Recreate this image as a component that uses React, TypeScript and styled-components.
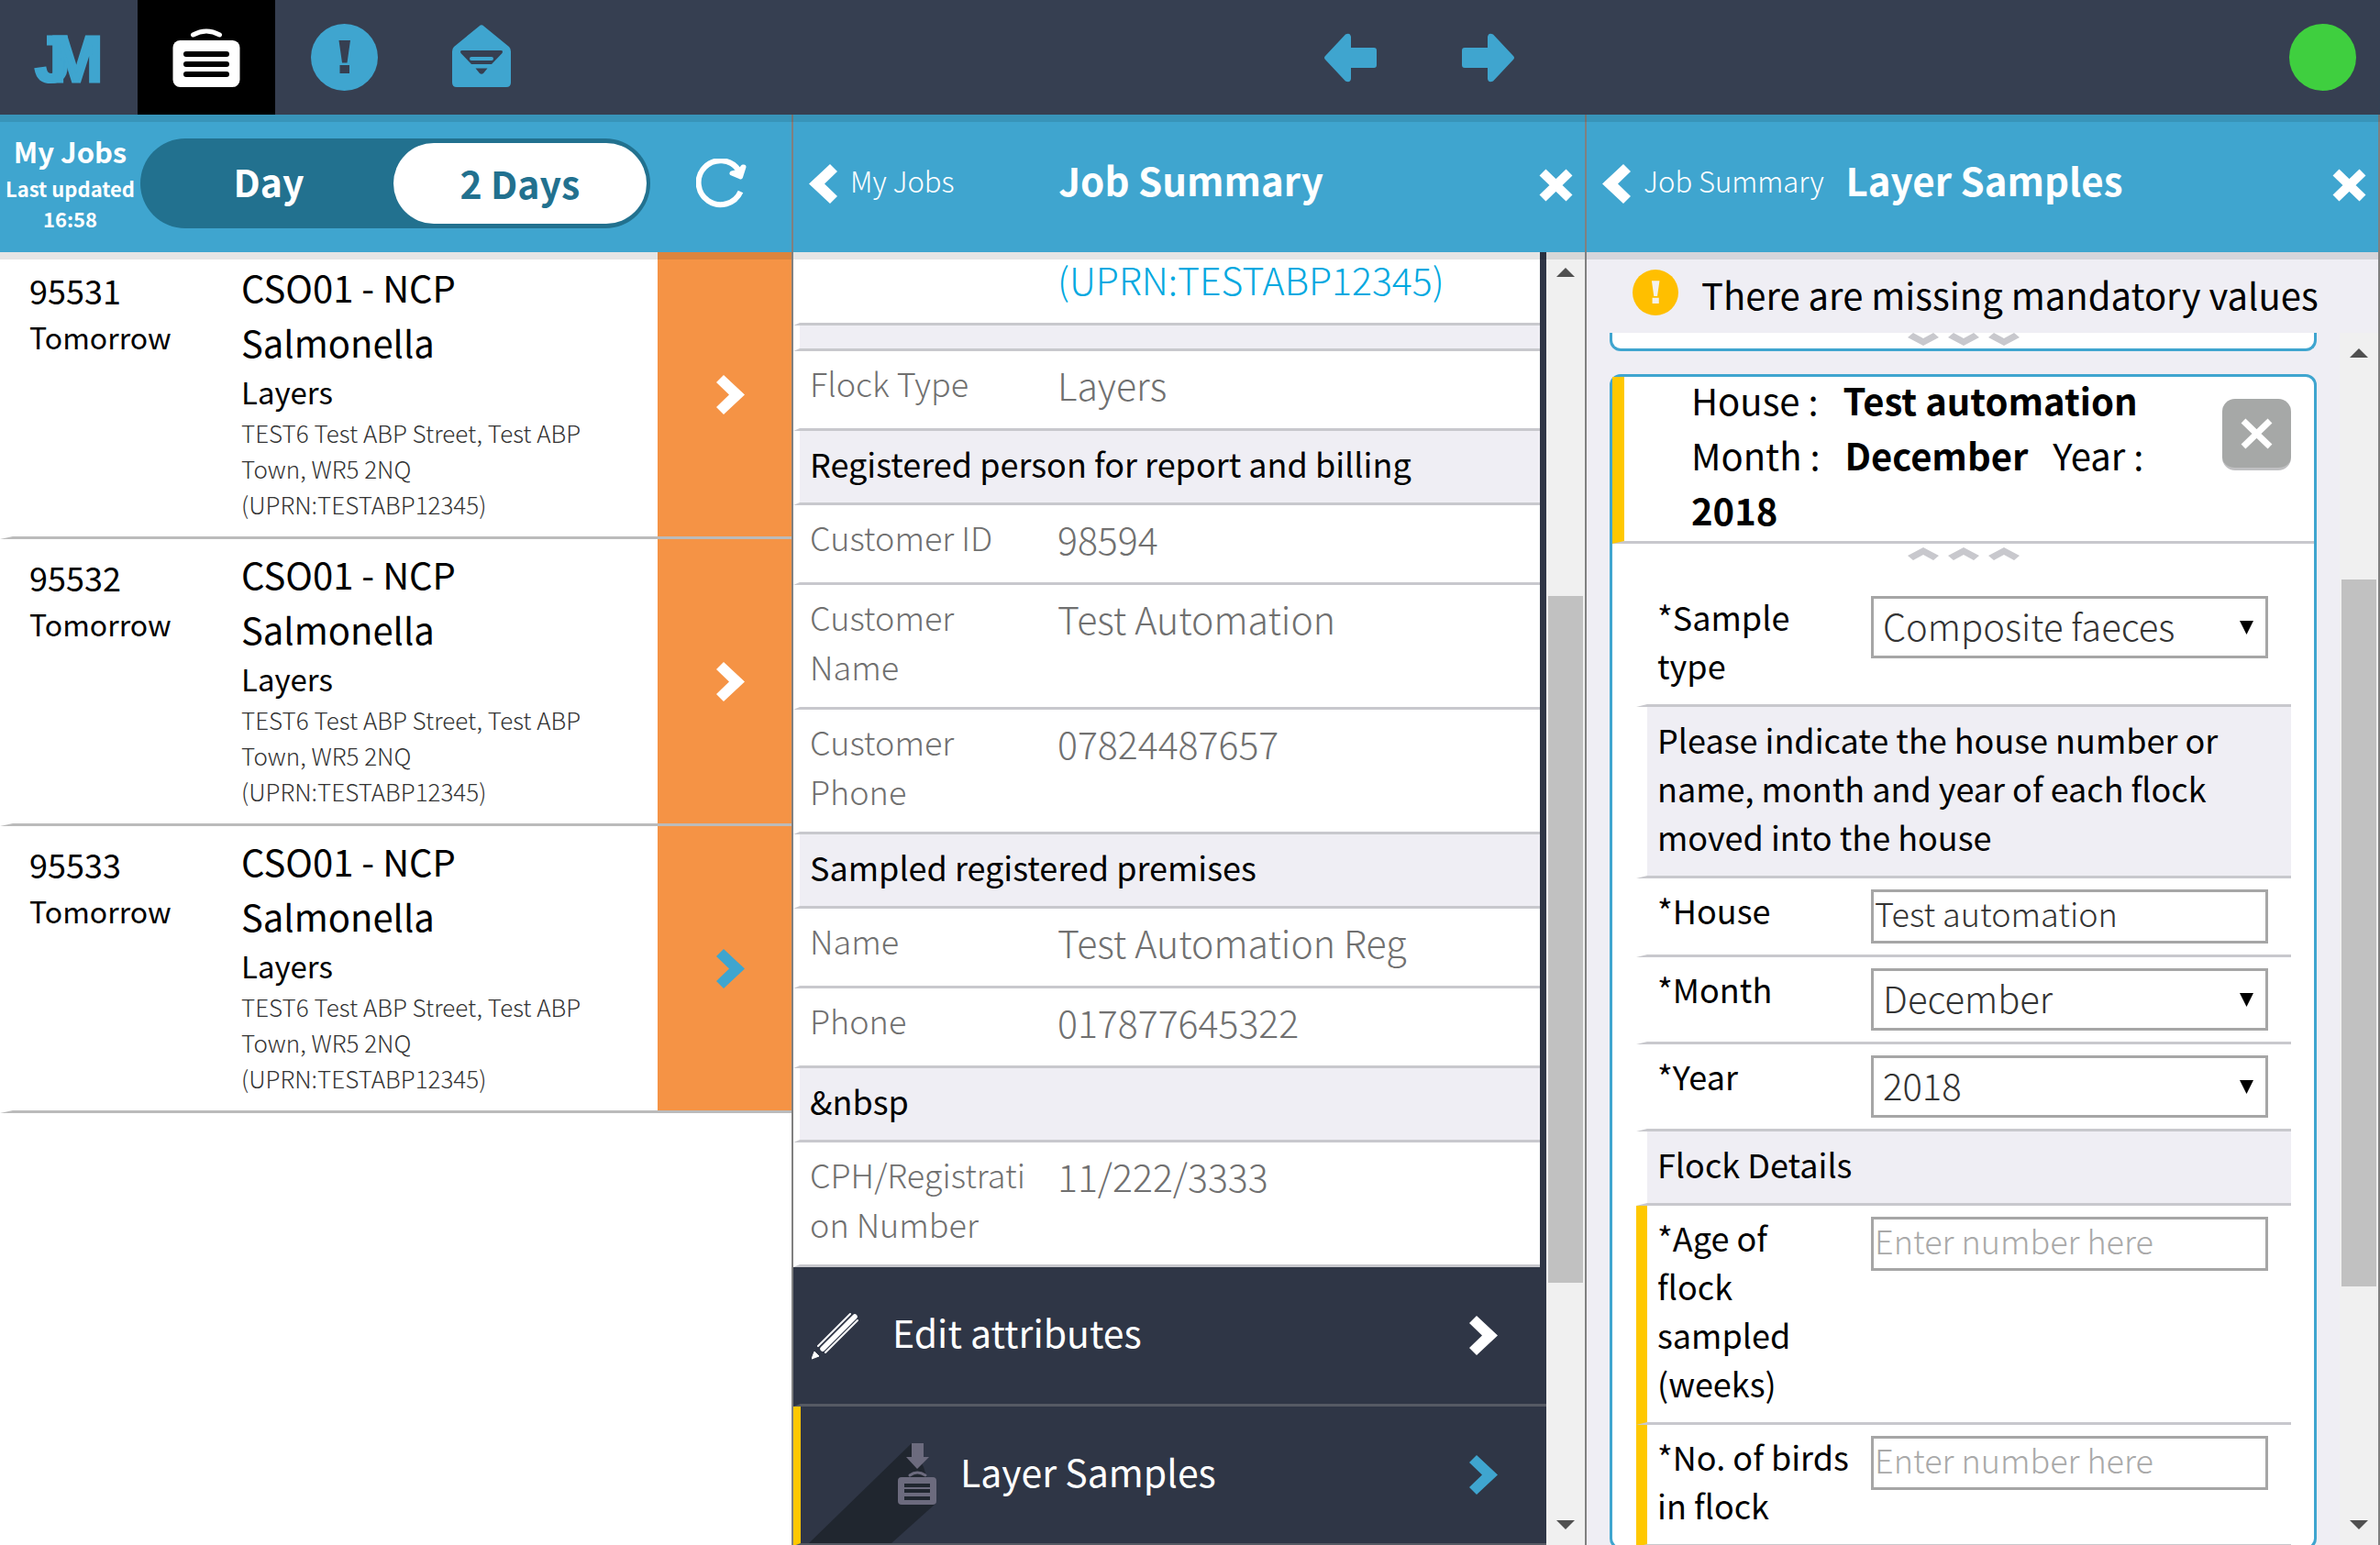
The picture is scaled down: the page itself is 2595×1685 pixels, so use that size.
import React from "react";
import styled, { createGlobalStyle } from "styled-components";

const color = {
  bar: "#363f51",
  blue: "#3fa5cf",
  deepBlue: "#22718f",
  dark: "#2f3646",
  orange: "#f59345",
  yellow: "#ffc800",
  amber: "#ffbf00",
  green: "#3fcf3f",
  panel: "#efeef4",
  line: "#c8c8cd",
  edge: "#808080",
  muted: "#707070",
  soft: "#333",
};

const GlobalStyle = createGlobalStyle`
  *, *::before, *::after { box-sizing: border-box; }
  body {
    margin: 0;
    font-family: "Noto Sans CJK SC", "Noto Sans", sans-serif;
    font-size: 36px;
    color: #000;
    background: #fff;
  }
  button, input, select { font: inherit; color: inherit; }
  button { border: 0; padding: 0; background: none; cursor: pointer; }
  a { color: inherit; text-decoration: none; }
  svg { display: block; flex: none; }
  h1, h2, p, dl, dt, dd, ul { margin: 0; padding: 0; }
`;

const Page = styled.div`
  display: flex;
  flex-direction: column;
  height: 100vh;
  overflow: hidden;
`;

/* ---------- top bar ---------- */

const TopBar = styled.header`
  position: relative;
  z-index: 2;
  display: grid;
  grid-template-columns: 1fr 1fr;
  flex: none;
  height: 125px;
  background: ${color.bar};
  box-shadow: 0 8px 0 rgba(0, 0, 0, 0.1);
`;

const TabList = styled.nav`
  display: flex;
`;

const Tab = styled.button<{ $active?: boolean }>`
  display: flex;
  align-items: center;
  justify-content: center;
  width: 150px;
  height: 125px;
  background: ${(p) => (p.$active ? "#000" : "transparent")};
`;

const HistoryBar = styled.div`
  display: flex;
  align-items: center;
  padding: 0 26px 0 100px;
`;

const Status = styled.span`
  width: 73px;
  height: 73px;
  margin-left: auto;
  border-radius: 50%;
  background: ${color.green};
`;

/* ---------- columns ---------- */

const Columns = styled.main`
  display: grid;
  grid-template-columns: repeat(3, minmax(0, 1fr));
  flex: 1;
  min-height: 0;
`;

const Column = styled.section<{ $tone?: string }>`
  display: flex;
  flex-direction: column;
  min-height: 0;
  border-right: 2px solid ${color.edge};
  background: ${(p) => p.$tone ?? "#fff"};
`;

const ColumnHeader = styled.div`
  position: relative;
  z-index: 1;
  flex: none;
  height: 150px;
  color: #fff;
  background: ${color.blue};
  box-shadow: 0 8px 0 rgba(0, 0, 0, 0.1);
`;

const PanelHeader = styled(ColumnHeader)`
  display: grid;
  grid-template-columns: 1fr auto 1fr;
  align-items: center;
  padding: 0 13px 0 17px;
`;

const BackLink = styled.a`
  display: flex;
  align-items: center;
  gap: 14px;
  font-size: 31px;
  font-weight: 300;
  white-space: nowrap;
`;

const Raised = styled.span`
  padding-bottom: 8px;
`;

const PanelTitle = styled.h2`
  padding-bottom: 10px;
  font-size: 42px;
  font-weight: 700;
  white-space: nowrap;
`;

const CloseButton = styled.button`
  justify-self: end;
  padding-top: 4px;
`;

const Body = styled.div`
  display: flex;
  flex: 1;
  min-height: 0;
`;

const Scroller = styled.div<{ $tone?: string }>`
  flex: 1;
  min-width: 0;
  overflow: hidden;
  background: ${(p) => p.$tone ?? "transparent"};
`;

const Track = styled.div`
  display: flex;
  flex-direction: column;
  flex: none;
  width: 42px;
  background: #f0f0f0;
`;

const TrackEnd = styled.div`
  display: flex;
  align-items: center;
  justify-content: center;
  flex: none;
  height: 44px;
`;

const TrackRun = styled.div<{ $grow: number }>`
  flex: ${(p) => p.$grow} 1 0;
`;

const Thumb = styled(TrackRun)`
  margin: 0 2px;
  background: #c1c1c1;
`;

/* ---------- my jobs ---------- */

const JobsHeader = styled(ColumnHeader)`
  display: flex;
  align-items: center;
`;

const Updated = styled.div`
  width: 153px;
  padding-bottom: 5px;
  text-align: center;
  font-size: 22px;
  font-weight: 700;
  line-height: 33px;
  white-space: nowrap;
`;

const UpdatedTitle = styled.h1`
  font-size: 31px;
  line-height: 49px;
`;

const Pill = styled.div`
  display: grid;
  grid-template-columns: 1fr 1fr;
  width: 556px;
  height: 98px;
  padding: 5px 4px 5px 0;
  border-radius: 49px;
  background: ${color.deepBlue};
`;

const PillOption = styled.button<{ $on?: boolean }>`
  height: 88px;
  padding: ${(p) => (p.$on ? "0 0 2px" : "0 0 6px 4px")};
  border-radius: 44px;
  font-size: 41px;
  font-weight: 700;
  line-height: 60px;
  color: ${(p) => (p.$on ? color.deepBlue : "#fff")};
  background: ${(p) => (p.$on ? "#fff" : "transparent")};
`;

const RefreshButton = styled.button`
  margin-left: 50px;
`;

const JobList = styled.ul`
  list-style: none;
`;

const JobRow = styled.li`
  display: grid;
  grid-template-columns: 230px 1fr 146px;
  border-left: 14px solid #fff;
  border-bottom: 3px solid #bbb;
`;

const JobRef = styled.div`
  padding: 14px 0 0 18px;
  line-height: 54px;
`;

const JobDay = styled.div`
  font-size: 32px;
  line-height: 48px;
`;

const JobInfo = styled.div`
  padding: 8px 60px 16px 19px;
`;

const JobName = styled.h2`
  max-width: 300px;
  font-size: 40px;
  font-weight: 400;
  line-height: 60px;
`;

const JobKind = styled.p`
  font-size: 33px;
  line-height: 49px;
`;

const JobAddress = styled.p`
  max-width: 400px;
  font-size: 26px;
  font-weight: 300;
  line-height: 39px;
  color: ${color.soft};
`;

const JobOpen = styled.button`
  display: flex;
  align-items: center;
  justify-content: center;
  padding-left: 13px;
  background: ${color.orange};
`;

/* ---------- job summary ---------- */

const Facts = styled.dl`
  margin-right: 7px;
  background: #fff;
`;

const FactRow = styled.div<{ $cut?: boolean }>`
  display: flex;
  min-height: ${(p) => (p.$cut ? 80 : 87)}px;
  padding: ${(p) => (p.$cut ? 0 : 7)}px 9px 17px 11px;
  border-left: 7px solid #fff;
  border-bottom: 3px solid ${color.line};
  color: ${color.muted};
  font-weight: 300;
`;

const FactLabel = styled.dt`
  flex: none;
  width: 244px;
  margin-right: 26px;
  padding-bottom: 1px;
  line-height: 54px;
  overflow-wrap: anywhere;
`;

const FactValue = styled.dd`
  font-size: 41px;
  line-height: 58px;
`;

const MapLink = styled.a`
  && {
    color: #00a8e0;
  }
`;

const FactHeading = styled.div<{ $blank?: boolean }>`
  height: ${(p) => (p.$blank ? 28 : 81)}px;
  padding: 8px 9px 0 11px;
  border-left: 7px solid #fff;
  border-bottom: 3px solid ${color.line};
  line-height: 54px;
  background: ${color.panel};
`;

const ActionRow = styled.a<{ $flag?: boolean }>`
  display: flex;
  align-items: center;
  height: 152px;
  padding-right: 53px;
  border-left: 8px solid ${(p) => (p.$flag ? color.yellow : color.dark)};
  border-bottom: 3px solid #565a64;
  background: ${color.dark};
`;

const ActionText = styled.span<{ $gap: number }>`
  flex: 1;
  padding: 0 0 10px ${(p) => p.$gap}px;
  font-size: 41px;
  line-height: 60px;
  color: #fff;
`;

const PencilBox = styled.span`
  padding-left: 12px;
`;

/* ---------- layer samples ---------- */

const Warning = styled.div`
  display: flex;
  align-items: center;
  flex: none;
  gap: 25px;
  height: 88px;
  padding-left: 50px;
  font-size: 40px;
  line-height: 60px;
  white-space: nowrap;
`;

const WarningText = styled.span`
  padding-top: 3px;
`;

const Cards = styled.div`
  padding: 0 25px;
`;

const ClosedCard = styled.div`
  display: flex;
  justify-content: center;
  height: 20px;
  margin-bottom: 25px;
  border: 3px solid ${color.blue};
  border-top: 0;
  border-radius: 0 0 12px 12px;
  background: #fff;
`;

const Card = styled.article`
  border: 3px solid ${color.blue};
  border-radius: 12px;
  background: #fff;
`;

const CardHead = styled.div`
  display: flex;
  align-items: flex-start;
  justify-content: space-between;
  height: 182px;
  padding: 0 25px 0 73px;
  border-left: 13px solid ${color.yellow};
  border-bottom: 3px solid ${color.line};
`;

const CardTitle = styled.p`
  width: 530px;
  margin-top: -5px;
  font-size: 40px;
  line-height: 60px;
`;

const DeleteButton = styled.button`
  display: flex;
  align-items: center;
  justify-content: center;
  width: 75px;
  height: 78px;
  margin-top: 24px;
  border-bottom: 3px solid #bfbfc1;
  border-radius: 14px;
  background: #a6a8a7;
`;

const Fold = styled.button`
  display: flex;
  justify-content: center;
  width: 100%;
  height: 45px;
  padding-top: 4px;
`;

const Fields = styled.form`
  padding: 0 25px 0 26px;
`;

const FieldRow = styled.div<{ $flag?: boolean }>`
  display: flex;
  align-items: flex-start;
  padding-right: 25px;
  border-left: 12px solid ${(p) => (p.$flag ? color.yellow : "#fff")};
  border-bottom: 3px solid ${color.line};
`;

const FieldLabel = styled.label`
  flex: none;
  width: 244px;
  padding: 8px 16px 16px 11px;
  line-height: 53px;
  white-space: pre-line;
`;

const FieldHeading = styled.p`
  padding: 9px 9px 16px 11px;
  border-left: 12px solid #fff;
  border-bottom: 3px solid ${color.line};
  line-height: 53px;
  background: ${color.panel};
`;

const TextInput = styled.input`
  flex: 1;
  min-width: 0;
  height: 59px;
  margin: 12px 0;
  padding: 0 1px 9px;
  border: 3px solid #a6a6a6;
  border-radius: 0;
  font-weight: 300;
  color: ${color.soft};
  background: #fff;
  &::placeholder {
    color: #a9a9a9;
    opacity: 1;
  }
`;

const SelectBox = styled.div`
  position: relative;
  flex: 1;
  height: 68px;
  margin: 12px 0;
  svg {
    position: absolute;
    top: 27px;
    right: 16px;
    pointer-events: none;
  }
`;

const Select = styled.select`
  width: 100%;
  height: 100%;
  padding: 0 40px 4px 10px;
  border: 3px solid #a6a6a6;
  border-radius: 0;
  appearance: none;
  font-size: 40px;
  font-weight: 300;
  color: ${color.soft};
  background: #fff;
`;

/* ---------- drawings ---------- */

const Chevron = ({ fill = "#fff", left = false }: { fill?: string; left?: boolean }) => (
  <svg width="31" height="43" viewBox="0 0 31 43" aria-hidden="true">
    <polygon
      fill={fill}
      points={left ? "23,0 31,8 17,21.5 31,35 23,43 0,21.5" : "8,0 31,21.5 8,43 0,35 14,21.5 0,8"}
    />
  </svg>
);

const Cross = ({ weight = 10 }: { weight?: number }) => (
  <svg width="37" height="36" viewBox="0 0 37 36" aria-hidden="true">
    <path d="M4 4L33 32M33 4L4 32" stroke="#fff" strokeWidth={weight} fill="none" />
  </svg>
);

const Triangle = ({ down = false }: { down?: boolean }) => (
  <svg width="20" height="10" viewBox="0 0 20 10" aria-hidden="true">
    <polygon fill="#505050" points={down ? "0,0 20,0 10,10" : "0,10 20,10 10,0"} />
  </svg>
);

const SelectArrow = () => (
  <svg width="15" height="15" viewBox="0 0 15 15" aria-hidden="true">
    <polygon points="0,0 15,0 7.5,15" />
  </svg>
);

const FoldMarks = ({ down = false }: { down?: boolean }) => (
  <svg width="122" height="14" viewBox="0 0 122 14" aria-hidden="true">
    {[0, 44, 88].map((x) => (
      <polygon
        key={x}
        fill={color.line}
        transform={`translate(${x} 0)`}
        points={down ? "17,14 34,5 28,0 17,6 6,0 0,5" : "17,0 34,9 28,14 17,8 6,14 0,9"}
      />
    ))}
  </svg>
);

const Logo = () => (
  <svg width="100" height="90" viewBox="0 0 100 90" role="img" aria-label="JM">
    <text
      x="13 29"
      y="71"
      fill={color.blue}
      stroke={color.blue}
      strokeWidth="3"
      fontFamily="Liberation Sans, sans-serif"
      fontWeight="700"
      fontSize="70"
    >
      JM
    </text>
  </svg>
);

const JobsIcon = () => (
  <svg width="74" height="68" viewBox="0 0 74 68" aria-hidden="true">
    <path d="M22.500 9Q37 1 51.500 9" fill="none" stroke="#fff" strokeWidth="5" strokeLinecap="round" />
    <rect x="0.500" y="15" width="73" height="51" rx="8" fill="#fff" />
    <path d="M15 30H59M15 41H59M15 52H59" stroke="#000" strokeWidth="6" strokeLinecap="round" />
  </svg>
);

const AlertIcon = ({ size, fill, mark }: { size: number; fill: string; mark: string }) => (
  <svg width={size} height={size} viewBox="0 0 73 73" aria-hidden="true">
    <circle cx="36.500" cy="36.500" r="36.500" fill={fill} />
    <path fill={mark} d="M30.500 18H43L39.500 42.500H34ZM31.500 45H42V54H31.500Z" />
  </svg>
);

const MailIcon = () => (
  <svg width="64" height="72" viewBox="0 0 64 72" aria-hidden="true">
    <path
      fill={color.blue}
      d="M29.500 1.500Q32 -1 34.500 1.500L62 24Q64 26 64 29V63Q64 68 59 68H5Q0 68 0 63V29Q0 26 2 24Z"
    />
    <path fill={color.bar} d="M11 28H53Q56 28 54.500 31L43 43H21L9.500 31Q8 28 11 28ZM25.500 47.500H38.500L34 53Q32 54.500 30 53Z" />
    <path d="M21 37H43" stroke={color.blue} strokeWidth="4" strokeLinecap="round" />
  </svg>
);

const Arrow = ({ right = false }: { right?: boolean }) => (
  <svg width="57" height="54" viewBox="0 0 57 54" aria-hidden="true">
    <path
      fill={color.blue}
      transform={right ? "translate(57 0) scale(-1 1)" : undefined}
      d="M1 25L23 1.500Q28 -1 29 4V16H54Q57 16 57 19V35Q57 38 54 38H29V50Q28 55 23 52.500L1 29Q-1 27 1 25Z"
    />
  </svg>
);

const RefreshIcon = () => (
  <svg width="56" height="54" viewBox="0 0 56 54" aria-hidden="true">
    <path d="M48.500 36A24 24 0 1 1 46 12" fill="none" stroke="#fff" strokeWidth="6" />
    <path
      d="M39 16L47 14L51 9L52 9L48.500 20Z"
      fill="#fff"
      stroke="#fff"
      strokeWidth="5"
      strokeLinejoin="round"
    />
  </svg>
);

const PencilIcon = () => (
  <svg width="51" height="52" viewBox="0 0 51 52" aria-hidden="true">
    <g stroke="#fff" strokeLinecap="round" fill="none">
      <path d="M12 40L47 5" strokeWidth="5.500" />
      <path d="M7 37L42 2M15 44L50 9" strokeWidth="2" />
    </g>
    <path d="M0 51L3 43L8 48Z" fill="#fff" stroke="#fff" strokeWidth="1" />
  </svg>
);

const SamplesIcon = () => (
  <svg width="150" height="149" viewBox="0 0 150 149" aria-hidden="true">
    <polygon fill="#20262f" points="121,40 9,149 99,149 147,106 134,66" />
    <g fill="#6c6b7e">
      <polygon points="121,40 134,40 134,55 140,55 127,68 115,55 121,55" />
      <rect x="106" y="77" width="42" height="30" rx="4" />
    </g>
    <path d="M119 75Q127 69 136 75" fill="none" stroke="#6c6b7e" strokeWidth="3" strokeLinecap="round" />
    <path d="M113 86H141M113 92H141M113 100H141" stroke="#20262f" strokeWidth="4" />
  </svg>
);

/* ---------- parts ---------- */

const ScrollBar = ({ before, thumb, after }: { before: number; thumb: number; after: number }) => (
  <Track aria-hidden="true">
    <TrackEnd><Triangle /></TrackEnd>
    <TrackRun $grow={before} />
    <Thumb $grow={thumb} />
    <TrackRun $grow={after} />
    <TrackEnd><Triangle down /></TrackEnd>
  </Track>
);

const Panel = ({ back, title }: { back: string; title: string }) => (
  <PanelHeader>
    <BackLink href="#back">
      <Chevron left />
      <Raised>{back}</Raised>
    </BackLink>
    <PanelTitle>{title}</PanelTitle>
    <CloseButton aria-label={`Close ${title}`}><Cross /></CloseButton>
  </PanelHeader>
);

const Fact = ({ label, value }: { label: string; value: string }) => (
  <FactRow>
    <FactLabel>{label}</FactLabel>
    <FactValue>{value}</FactValue>
  </FactRow>
);

const SelectField = ({ id, label, value }: { id: string; label: string; value: string }) => (
  <FieldRow>
    <FieldLabel htmlFor={id}>{label}</FieldLabel>
    <SelectBox>
      <Select id={id} defaultValue={value}>
        <option>{value}</option>
      </Select>
      <SelectArrow />
    </SelectBox>
  </FieldRow>
);

const NumberField = ({ id, label }: { id: string; label: string }) => (
  <FieldRow $flag>
    <FieldLabel htmlFor={id}>{label}</FieldLabel>
    <TextInput id={id} placeholder="Enter number here" />
  </FieldRow>
);

const jobs = [
  { id: "95531", open: false },
  { id: "95532", open: false },
  { id: "95533", open: true },
];

export default function App() {
  return (
    <Page>
      <GlobalStyle />
      <TopBar>
        <TabList>
          <Tab aria-label="Home"><Logo /></Tab>
          <Tab $active aria-label="Jobs"><JobsIcon /></Tab>
          <Tab aria-label="Alerts"><AlertIcon size={73} fill={color.blue} mark={color.bar} /></Tab>
          <Tab aria-label="Messages"><MailIcon /></Tab>
        </TabList>
        <HistoryBar>
          <Tab aria-label="Previous"><Arrow /></Tab>
          <Tab aria-label="Next"><Arrow right /></Tab>
          <Status />
        </HistoryBar>
      </TopBar>

      <Columns>
        <Column>
          <JobsHeader>
            <Updated>
              <UpdatedTitle>My Jobs</UpdatedTitle>
              <div>Last updated</div>
              <div>16:58</div>
            </Updated>
            <Pill>
              <PillOption>Day</PillOption>
              <PillOption $on>2 Days</PillOption>
            </Pill>
            <RefreshButton aria-label="Refresh"><RefreshIcon /></RefreshButton>
          </JobsHeader>
          <JobList>
            {jobs.map((job) => (
              <JobRow key={job.id}>
                <JobRef>
                  {job.id}
                  <JobDay>Tomorrow</JobDay>
                </JobRef>
                <JobInfo>
                  <JobName>CSO01 - NCP Salmonella</JobName>
                  <JobKind>Layers</JobKind>
                  <JobAddress>TEST6 Test ABP Street, Test ABP Town, WR5 2NQ (UPRN:TESTABP12345)</JobAddress>
                </JobInfo>
                <JobOpen aria-label={`Open job ${job.id}`}>
                  <Chevron fill={job.open ? color.blue : "#fff"} />
                </JobOpen>
              </JobRow>
            ))}
          </JobList>
        </Column>

        <Column>
          <Panel back="My Jobs" title="Job Summary" />
          <Body>
            <Scroller $tone={color.dark}>
              <Facts>
                <FactRow $cut>
                  <FactLabel />
                  <FactValue><MapLink href="#map">(UPRN:TESTABP12345)</MapLink></FactValue>
                </FactRow>
                <FactHeading $blank />
                <Fact label="Flock Type" value="Layers" />
                <FactHeading>Registered person for report and billing</FactHeading>
                <Fact label="Customer ID" value="98594" />
                <Fact label="Customer Name" value="Test Automation" />
                <Fact label="Customer Phone" value="07824487657" />
                <FactHeading>Sampled registered premises</FactHeading>
                <Fact label="Name" value="Test Automation Reg" />
                <Fact label="Phone" value="017877645322" />
                <FactHeading>{"&nbsp"}</FactHeading>
                <Fact label="CPH/Registration Number" value="11/222/3333" />
              </Facts>
              <ActionRow href="#edit">
                <PencilBox><PencilIcon /></PencilBox>
                <ActionText $gap={37}>Edit attributes</ActionText>
                <Chevron />
              </ActionRow>
              <ActionRow href="#samples" $flag>
                <SamplesIcon />
                <ActionText $gap={24}>Layer Samples</ActionText>
                <Chevron fill={color.blue} />
              </ActionRow>
            </Scroller>
            <ScrollBar before={331} thumb={749} after={242} />
          </Body>
        </Column>

        <Column $tone={color.panel}>
          <Panel back="Job Summary" title="Layer Samples" />
          <Warning role="alert">
            <AlertIcon size={50} fill={color.amber} mark="#f4f2ee" />
            <WarningText>There are missing mandatory values</WarningText>
          </Warning>
          <Body>
            <Scroller>
              <Cards>
                <ClosedCard><FoldMarks down /></ClosedCard>
                <Card>
                  <CardHead>
                    <CardTitle>
                      House :{"\u00a0\u00a0"} <strong>Test automation</strong> Month :{"\u00a0\u00a0"}{" "}
                      <strong>December</strong>
                      {"\u00a0\u00a0 "}Year :{"\u00a0\u00a0"} <strong>2018</strong>
                    </CardTitle>
                    <DeleteButton aria-label="Delete sample"><Cross weight={7} /></DeleteButton>
                  </CardHead>
                  <Fold aria-label="Collapse sample"><FoldMarks /></Fold>
                  <Fields>
                    <SelectField id="sample-type" label="*Sample type" value="Composite faeces" />
                    <FieldHeading>
                      Please indicate the house number or name, month and year of each flock moved into the house
                    </FieldHeading>
                    <FieldRow>
                      <FieldLabel htmlFor="house">*House</FieldLabel>
                      <TextInput id="house" defaultValue="Test automation" />
                    </FieldRow>
                    <SelectField id="month" label="*Month" value="December" />
                    <SelectField id="year" label="*Year" value="2018" />
                    <FieldHeading>Flock Details</FieldHeading>
                    <NumberField id="age" label={"*Age of\nflock\nsampled\n(weeks)"} />
                    <NumberField id="birds" label={"*No. of birds\nin flock"} />
                  </Fields>
                </Card>
              </Cards>
            </Scroller>
            <ScrollBar before={225} thumb={771} after={238} />
          </Body>
        </Column>
      </Columns>
    </Page>
  );
}
